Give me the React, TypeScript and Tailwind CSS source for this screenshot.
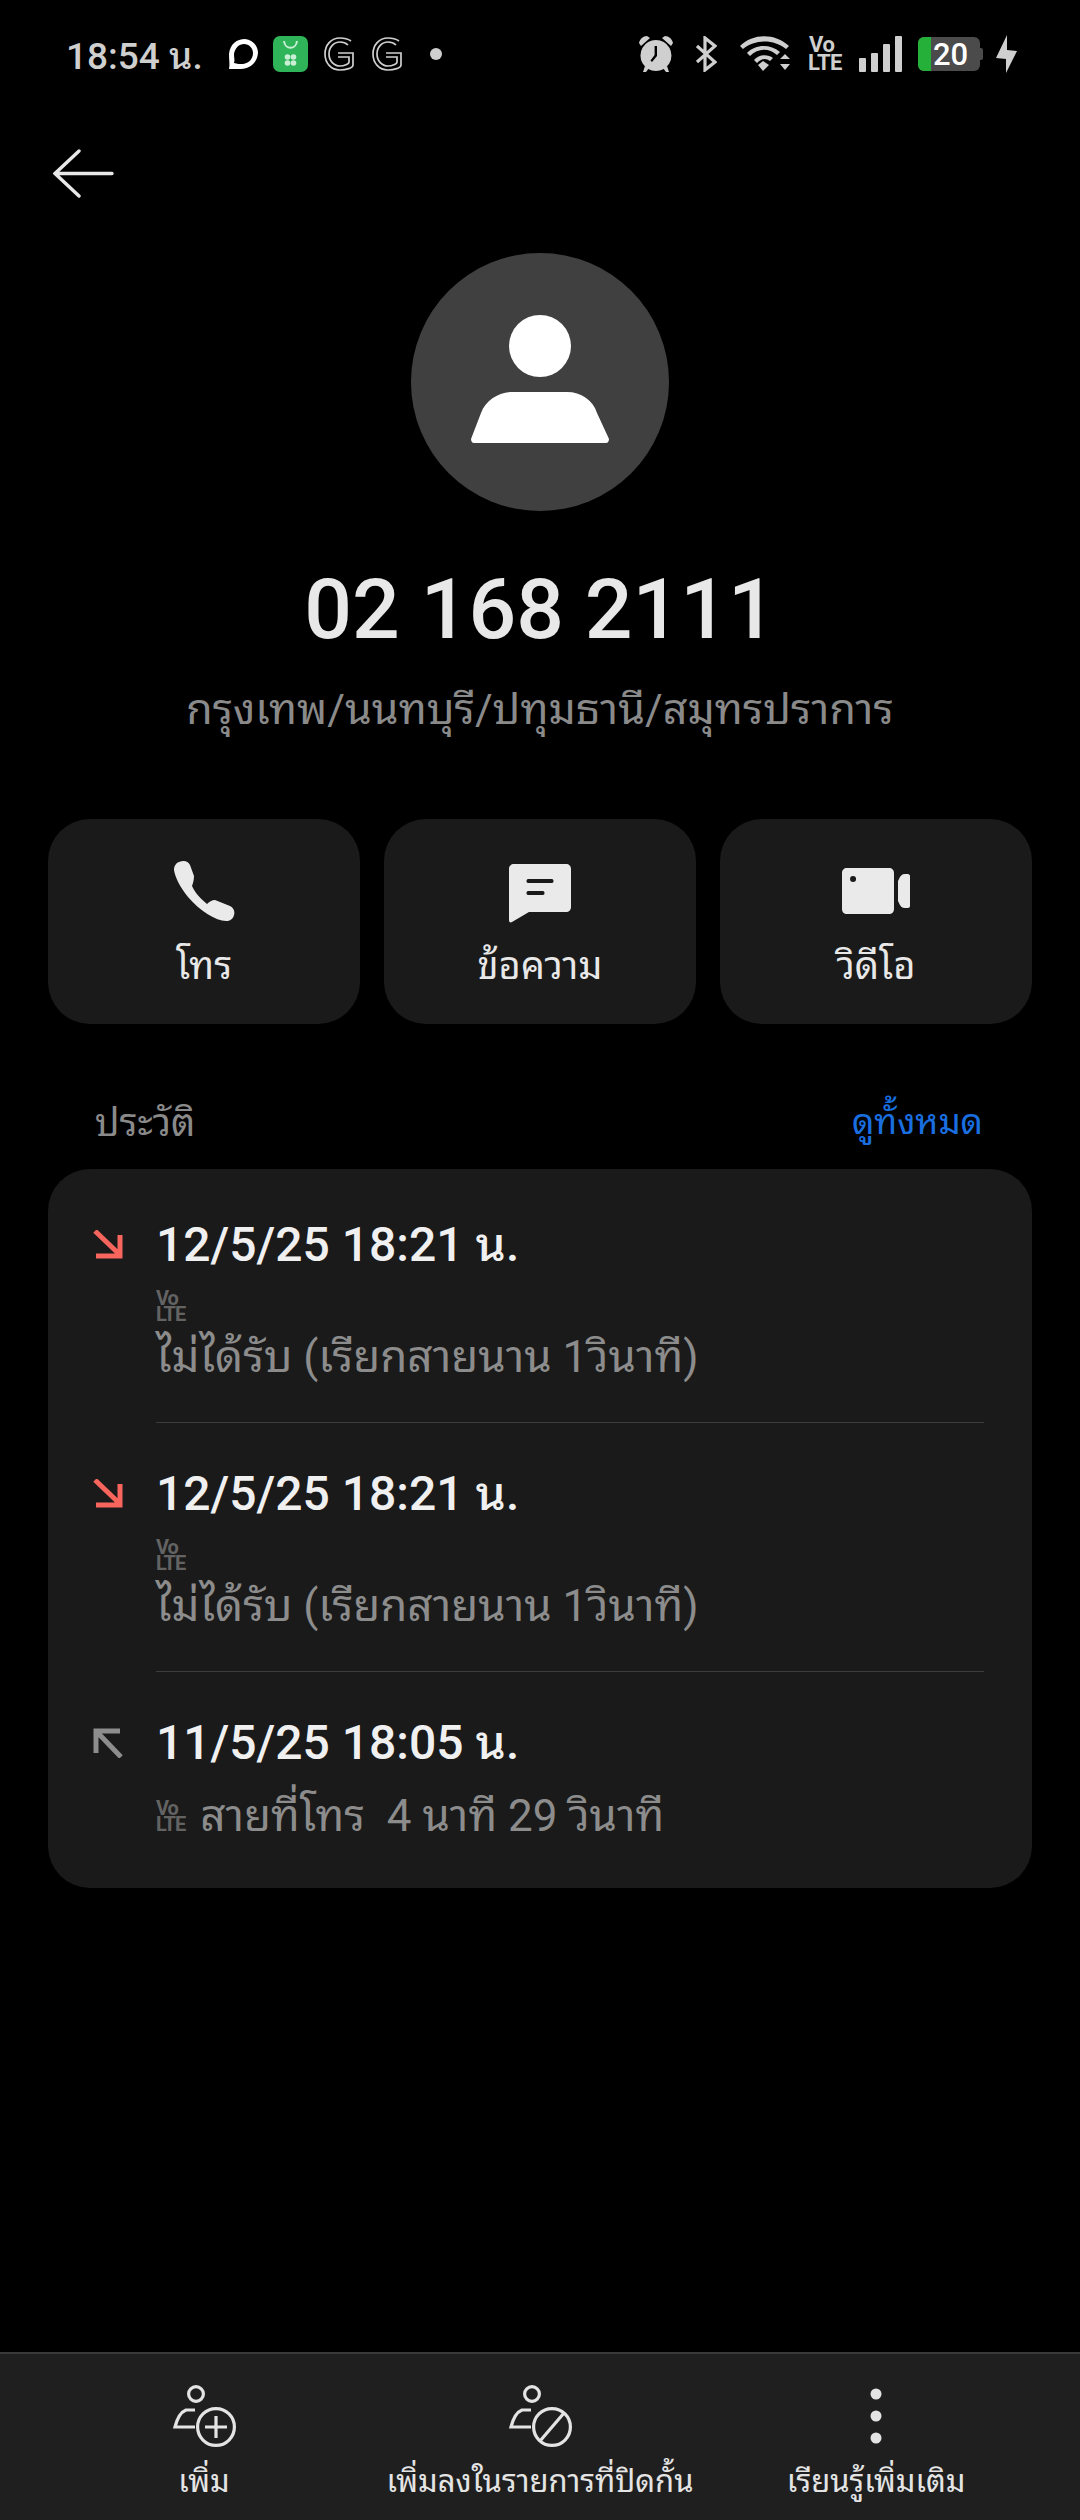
const font = { fontFamily: '"Roboto", "Noto Sans Thai Looped", "Noto Sans Thai", "Noto Sans", "Liberation Sans", sans-serif' }

function VoLte({ className }: { className: string }) {
    return (
        <div className={`flex flex-col items-start font-bold ${className}`}>
            <span>Vo</span>
            <span>LTE</span>
        </div>
    )
}

function GIcon({ className }: { className: string }) {
    return (
        <svg viewBox="0 0 30 34" className={`h-[34px] w-[30px] ${className}`} fill="none" stroke="#cfcfcf" strokeWidth="1.7">
            <path d="M27 4 C24 2 20 1 16 1 C7 1 1 8 1 17 C1 26 7 33 16 33 C22 33 29 31 29 28 L29 16 L14 16" />
            <path d="M24 8 C22 6 19 5 16 5 C10 5 5 10 5 17 C5 24 10 29 16 29 C20 29 25 27 25 25 L25 20 L14 20" />
        </svg>
    )
}

function StatusBar() {
    return (
        <div className="flex h-[108px] items-center pl-[66px] pr-[63px] text-[#cfcfcf]">
            <span className="mt-[5px] w-[133px] whitespace-nowrap text-[37px] font-medium leading-none">18:54 น.</span>
            <svg viewBox="0 0 30 32" className="ml-[29px] h-[32px] w-[30px]">
                <path d="M1 31 C2 26 1 22 1 16 C2 6 9 1 17 1 C25 2 30 8 30 15 C29 25 22 31 13 31 C8 31 4 31 1 31 Z M6 25 C9 26 12 26 15 26 C21 25 25 21 25 15 C25 10 21 6 16 6 C11 6 7 10 6 16 C6 20 7 22 6 25 Z" fill="#ffffff" fillRule="evenodd" />
            </svg>
            <div className="ml-[15px] h-[36px] w-[35px] rounded-[7px] bg-[#2fb45a]">
                <svg viewBox="0 0 35 36" className="h-[36px] w-[35px]">
                    <path d="M11 5 C12 14 23 14 24 5" fill="none" stroke="#c9efd5" strokeWidth="2" />
                    <circle cx="14.5" cy="21" r="2.8" fill="#c9efd5" />
                    <circle cx="20.5" cy="21" r="2.8" fill="#c9efd5" />
                    <circle cx="14.5" cy="27" r="2.8" fill="#c9efd5" />
                    <circle cx="20.5" cy="27" r="2.8" fill="#c9efd5" />
                </svg>
            </div>
            <GIcon className="ml-[16px]" />
            <GIcon className="ml-[18px]" />
            <span className="ml-[28px] h-[12px] w-[12px] rounded-full bg-[#cfcfcf]" />
            <div className="flex-1" />
            <svg viewBox="0 0 36 38" className="h-[38px] w-[36px]" fill="#cfcfcf">
                <path d="M1 8 C2 4 5 1 9 1 L12 3 L3 11 Z M35 8 C34 4 31 1 27 1 L24 3 L33 11 Z" />
                <path d="M18 5 A15.5 15.5 0 1 1 17.9 5 Z M19 11 L19 21 L14 27 L12.5 25.5 L16.6 20 L16.6 11 Z" fillRule="evenodd" />
                <path d="M7 31 L5 37 L8 37 L11 33 Z M29 31 L31 37 L28 37 L25 33 Z" />
            </svg>
            <svg viewBox="0 0 21 36" className="ml-[22px] h-[36px] w-[21px]" fill="none" stroke="#cfcfcf" strokeWidth="3.2">
                <path d="M1 10 L19 26 L9 34 L9 2 L19 10 L1 26" />
            </svg>
            <svg viewBox="0 0 50 36" className="ml-[23px] h-[36px] w-[50px]" fill="#cfcfcf">
                <path d="M0 10 C13 -3 35 -3 49 10 L46 13 C34 3 15 3 3 13 Z" />
                <path d="M7 17 C16 8 30 8 40 16 L37 19 C29 12 18 12 10 20 Z" />
                <path d="M14 24 C19 18 28 18 33 22 L30 25 C26 22 22 22 17 27 Z" />
                <path d="M18 29 L23 25 L29 29 L23 35 Z" />
                <path d="M40 23 L50 23 L45 18 Z M40 28 L50 28 L45 34 Z" />
            </svg>
            <div className="ml-[18px] flex w-[31px] flex-col text-[22px] font-bold leading-[18px] tracking-[-0.5px]">
                <span className="pl-[1px]">Vo</span>
                <span>LTE</span>
            </div>
            <div className="ml-[20px] flex h-[36px] items-end gap-[5px]">
                <span className="h-[14px] w-[7px] rounded-[1px] bg-[#cfcfcf]" />
                <span className="h-[19px] w-[7px] rounded-[1px] bg-[#cfcfcf]" />
                <span className="h-[28px] w-[7px] rounded-[1px] bg-[#cfcfcf]" />
                <span className="h-[36px] w-[7px] rounded-[1px] bg-[#cfcfcf]" />
            </div>
            <div className="ml-[16px] flex items-center">
                <div className="flex h-[34px] w-[62px] items-center overflow-hidden rounded-[6px] bg-[#4b4b4b]">
                    <div className="h-full w-[13px] shrink-0 bg-[#25b03a]" />
                    <span className="ml-[2px] text-[31px] font-medium leading-none text-white">20</span>
                </div>
                <div className="h-[12px] w-[3px] rounded-r-[2px] bg-[#4b4b4b]" />
            </div>
            <svg viewBox="0 0 21 38" className="ml-[13px] h-[38px] w-[21px]" fill="#cfcfcf">
                <path d="M11 0 L11 15 L21 16 L10 38 L10 24 L0 23 Z" />
            </svg>
        </div>
    )
}

function ActionButton({ label, children }: { label: string; children: React.ReactNode }) {
    return (
        <div className="flex h-[205px] flex-col items-center rounded-[42px] bg-[#1a1a1a] pt-[39px]">
            <div className="flex h-[66px] items-center justify-center">{children}</div>
            <span className="mt-[16px] text-[38px] leading-[52px] text-[#e8e8e8]">{label}</span>
        </div>
    )
}

function CallRow({ date, missed, last, duration }: { date: string; missed?: boolean; last?: boolean; duration: string }) {
    return (
        <div className="flex">
            <div className="w-[108px] pl-[45px] pt-[56px]">
                {missed ? (
                    <svg viewBox="0 0 30 30" className="h-[30px] w-[30px]" fill="none" stroke="#f7655c" strokeWidth="5">
                        <path d="M2 1 L26 24 M3 26 L27 26 L27 5" />
                    </svg>
                ) : (
                    <svg viewBox="0 0 30 30" className="h-[30px] w-[30px]" fill="none" stroke="#8d8d8d" strokeWidth="5">
                        <path d="M28 29 L4 4 M27 3 L3 3 L3 25" />
                    </svg>
                )}
            </div>
            <div className="flex-1 pr-[48px] pt-[44px]">
                <div className="text-[48px] font-medium leading-[54px] text-[#f0f0f0]">{date}</div>
                {missed ? (
                    <div>
                        <VoLte className="mt-[18px] h-[33px] text-[20px] leading-[16px] tracking-[-1px] text-[#636363]" />
                        <div className="mt-[8px] text-[44px] leading-[52px] text-[#8c8c8c]">ไม่ได้รับ (เรียกสายนาน 1วินาที)</div>
                    </div>
                ) : (
                    <div className="mt-[20px] flex items-center">
                        <VoLte className="text-[20px] leading-[16px] tracking-[-1px] text-[#636363]" />
                        <span className="ml-[15px] whitespace-pre text-[44px] leading-[52px] text-[#8c8c8c]">{duration}</span>
                    </div>
                )}
                {!last && <div className="mt-[39px] h-[1px] bg-[#3d3d3d]" />}
            </div>
        </div>
    )
}

function BottomAction({ label, children }: { label: string; children: React.ReactNode }) {
    return (
        <div className="flex w-[336px] flex-col items-center">
            <div className="flex h-[62px] items-center justify-center">{children}</div>
            <span className="mt-[15px] whitespace-nowrap text-[31px] leading-[40px] text-[#e4e4e4]">{label}</span>
        </div>
    )
}

function PersonBase({ children }: { children: React.ReactNode }) {
    return (
        <svg viewBox="0 0 63 62" className="h-[62px] w-[63px]" fill="none" stroke="#e4e4e4" strokeWidth="3.2">
            <circle cx="23" cy="9" r="7.4" />
            <path d="M22 25 L13 25 C8 27 4 34 2 42 L22 42" />
            <circle cx="43" cy="42" r="18.4" />
            {children}
        </svg>
    )
}

export default function App() {
    return (
        <div className="flex h-[2520px] w-[1080px] flex-col bg-black" style={font}>
            <StatusBar />
            <div className="pl-[53px] pt-[41px]">
                <svg viewBox="0 0 61 49" className="block h-[49px] w-[61px]" fill="none" stroke="#e8e8e8" strokeWidth="3.4" strokeLinecap="round">
                    <path d="M59 24.5 L2 24.5 M26 2 L2 24.5 L26 47" />
                </svg>
            </div>
            <div className="flex flex-col items-center">
                <div className="mt-[55px] flex h-[258px] w-[258px] flex-col items-center rounded-full bg-[#404040]">
                    <svg viewBox="0 0 138 128" className="mt-[62px] h-[128px] w-[138px]" fill="#ffffff">
                        <circle cx="69" cy="31" r="31" />
                        <path d="M42 77 L96 77 C110 77 122 85 126 98 L138 124 C138 126 137 128 135 128 L3 128 C1 128 0 126 0 124 L10 98 C15 85 28 77 42 77 Z" />
                    </svg>
                </div>
                <div className="mt-[49px] text-[84px] font-medium leading-[100px] text-[#e8e8e8]">02 168 2111</div>
                <div className="mt-[19px] text-[43px] leading-[60px] text-[#8a8a8a]">กรุงเทพ/นนทบุรี/ปทุมธานี/สมุทรปราการ</div>
            </div>
            <div className="mt-[80px] grid grid-cols-3 gap-[24px] px-[48px]">
                <ActionButton label="โทร">
                    <svg viewBox="0 0 61 60" className="h-[60px] w-[61px]" fill="#eaeaea">
                        <path d="M5 1 C10 -1 14 0 16 4 L20 15 C20 19 19 22 18 25 C21 32 27 38 33 43 C35 41 38 39 41 39 L56 45 C60 47 61 51 60 54 C59 58 56 60 52 60 C42 60 26 50 14 36 C6 26 1 16 0 9 C0 5 2 2 5 1 Z" />
                    </svg>
                </ActionButton>
                <ActionButton label="ข้อความ">
                    <svg viewBox="0 0 62 59" className="mt-[4px] h-[59px] w-[62px]" fill="#eaeaea">
                        <path fillRule="evenodd" d="M5 0 L57 0 C60 0 62 2 62 5 L62 43 C62 46 60 48 57 48 L20 48 L3 58 C1 59 0 58 0 56 L0 5 C0 2 2 0 5 0 Z M19 15 C17 15 17 19 19 19 L43 19 C45 19 45 15 43 15 Z M19 27 C17 27 17 31 19 31 L34 31 C36 31 36 27 34 27 Z" />
                    </svg>
                </ActionButton>
                <ActionButton label="วิดีโอ">
                    <svg viewBox="0 0 68 46" className="h-[46px] w-[68px]" fill="#eaeaea">
                        <path fillRule="evenodd" d="M5 0 L47 0 C50 0 52 2 52 5 L52 41 C52 44 50 46 47 46 L5 46 C2 46 0 44 0 41 L0 5 C0 2 2 0 5 0 Z M11 8 A3 3 0 1 0 11.1 14 A3 3 0 1 0 11 8 Z" />
                        <path d="M66 6 C67 6 68 7 68 8 L68 38 C68 39 67 40 66 40 L63 40 C60 40 58 38 57 35 L56 33 L56 13 L57 11 C58 8 60 6 63 6 Z" />
                    </svg>
                </ActionButton>
            </div>
            <div className="mt-[74px] flex h-[50px] items-center justify-between pl-[95px] pr-[97px]">
                <span className="text-[38px] text-[#8a8a8a]">ประวัติ</span>
                <span className="text-[35px] text-[#1a6fe0]">ดูทั้งหมด</span>
            </div>
            <div className="mx-[48px] mt-[21px] h-[719px] rounded-[42px] bg-[#1a1a1a] pt-[5px]">
                <CallRow date="12/5/25 18:21 น." missed duration="" />
                <CallRow date="12/5/25 18:21 น." missed duration="" />
                <CallRow date="11/5/25 18:05 น." last duration="สายที่โทร  4 นาที 29 วินาที" />
            </div>
            <div className="flex-1" />
            <div className="flex h-[168px] border-t-2 border-[#3a3a3a] bg-[#1f1f1f] px-[36px] pt-[31px]">
                <BottomAction label="เพิ่ม">
                    <PersonBase>
                        <path d="M43 31 L43 53 M32 42 L54 42" />
                    </PersonBase>
                </BottomAction>
                <BottomAction label="เพิ่มลงในรายการที่ปิดกั้น">
                    <PersonBase>
                        <path d="M31 56 L55 28" />
                    </PersonBase>
                </BottomAction>
                <BottomAction label="เรียนรู้เพิ่มเติม">
                    <svg viewBox="0 0 12 56" className="h-[56px] w-[12px]" fill="#e4e4e4">
                        <circle cx="6" cy="6" r="5.5" />
                        <circle cx="6" cy="28" r="5.5" />
                        <circle cx="6" cy="50" r="5.5" />
                    </svg>
                </BottomAction>
            </div>
        </div>
    )
}
